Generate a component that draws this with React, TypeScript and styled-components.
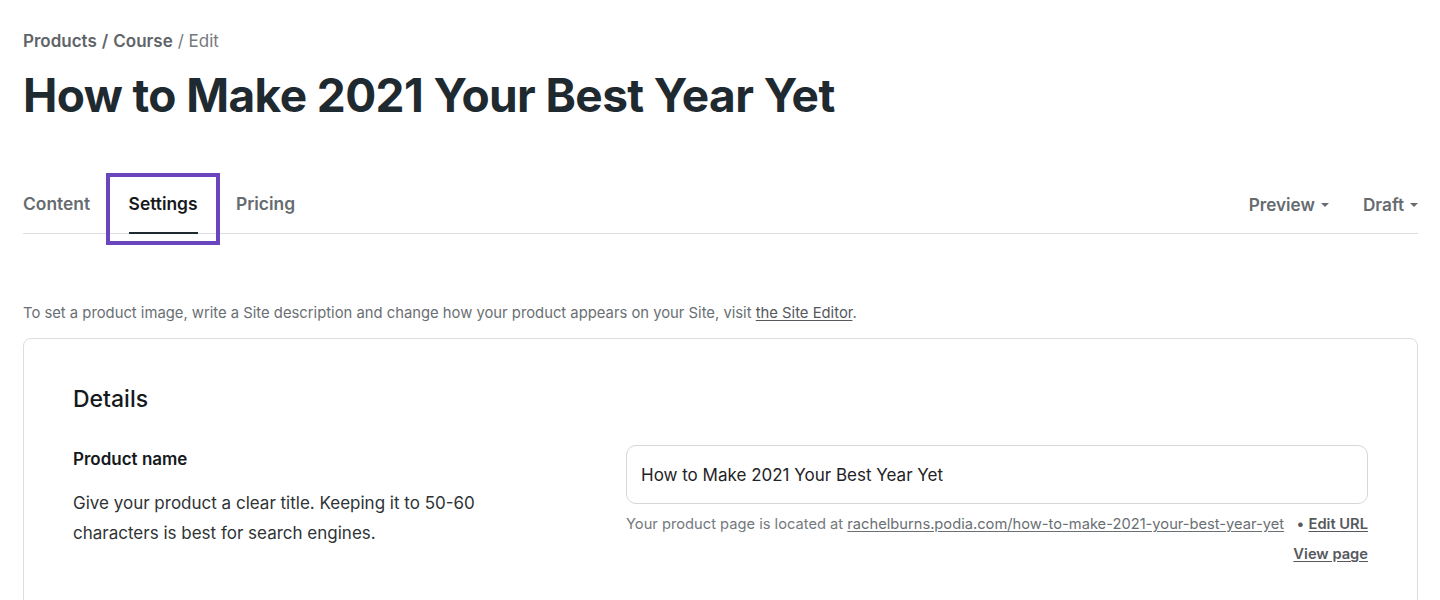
import React from "react";
import styled, { createGlobalStyle } from "styled-components";

const Global = createGlobalStyle`
  html, body { margin: 0; padding: 0; background: #ffffff; }
  body { font-family: Inter, "Noto Sans", "Liberation Sans", sans-serif; color: #1f2a30; }
  * { box-sizing: border-box; }
`;

const Page = styled.div`
  padding: 29px 22px 0 23px;
  height: 600px;
  overflow: hidden;
`;

const Breadcrumb = styled.nav`
  font-size: 17px;
  line-height: 24px;
  color: #5f6468;
  font-weight: 600;
  display: flex;
  gap: 5px;
`;

const Crumb = styled.span<{ $current?: boolean }>`
  font-weight: ${(p) => (p.$current ? 400 : 600)};
  color: ${(p) => (p.$current ? "#74797d" : "#5f6468")};
`;

const Title = styled.h1`
  margin: 12px 0 0;
  font-size: 46px;
  line-height: 60px;
  font-weight: 700;
  letter-spacing: -0.6px;
  color: #1f2a30;
`;

const TabBar = styled.div`
  margin-top: 49px;
  display: flex;
  align-items: stretch;
  border-bottom: 1px solid #dcdde0;
  height: 60px;
`;

const Tabs = styled.div`
  display: flex;
  gap: 38.5px;
  flex: 1;
`;

const Tab = styled.div<{ $active?: boolean }>`
  position: relative;
  display: flex;
  align-items: center;
  font-size: 17.4px;
  font-weight: 600;
  color: ${(p) => (p.$active ? "#15191c" : "#666b6f")};
  border-bottom: 2px solid ${(p) => (p.$active ? "#1f2a30" : "transparent")};
  margin-bottom: -1px;
  padding-top: 1px;
`;

const Highlight = styled.span`
  position: absolute;
  left: -23px;
  right: -22px;
  top: -1px;
  bottom: -13px;
  border: 4px solid #6a45bd;
  pointer-events: none;
`;

const Menus = styled.div`
  display: flex;
  gap: 34px;
`;

const Menu = styled.div`
  display: flex;
  align-items: center;
  gap: 6px;
  font-size: 17.2px;
  font-weight: 600;
  color: #666b6f;
  padding-top: 1px;
`;

const Caret = styled.span`
  width: 0;
  height: 0;
  border-left: 4px solid transparent;
  border-right: 4px solid transparent;
  border-top: 4px solid #666b6f;
  margin-top: 2px;
`;

const Info = styled.p`
  margin: 68px 0 0;
  font-size: 14.8px;
  line-height: 22px;
  color: #6a6f73;
`;

const InfoLink = styled.a`
  color: #55595d;
  text-decoration: underline;
  text-underline-offset: 2px;
`;

const Card = styled.section`
  margin-top: 14px;
  border: 1px solid #dcdde0;
  border-radius: 8px;
  padding: 44px 49px 60px;
`;

const CardTitle = styled.h2`
  margin: 0;
  font-size: 23px;
  line-height: 32px;
  font-weight: 500;
  color: #15191c;
`;

const FieldRow = styled.div`
  margin-top: 30px;
  display: grid;
  grid-template-columns: 553px 1fr;
`;

const FieldLabel = styled.div`
  font-size: 17px;
  line-height: 24px;
  font-weight: 600;
  color: #15191c;
  padding-top: 2px;
`;

const FieldDesc = styled.p`
  margin: 17px 0 0;
  font-size: 17px;
  line-height: 30px;
  color: #2e3336;
  max-width: 440px;
`;

const FieldControl = styled.div`
  display: flex;
  flex-direction: column;
`;

const Input = styled.input`
  height: 59px;
  border: 1px solid #d6d7da;
  border-radius: 10px;
  padding: 0 14px;
  font-family: inherit;
  font-size: 17px;
  color: #1f2326;
  outline: none;
  background: #fff;
`;

const Helper = styled.div`
  margin-top: 9px;
  display: flex;
  justify-content: space-between;
  font-size: 14.7px;
  line-height: 22px;
  color: #74797d;
`;

const HelperLink = styled.a`
  color: #6a6f73;
  text-decoration: underline;
  text-underline-offset: 2px;
`;

const Actions = styled.div`
  display: flex;
  flex-direction: column;
  align-items: flex-end;
  gap: 8px;
`;

const BoldLink = styled.a`
  color: #55595d;
  font-weight: 600;
  text-decoration: underline;
  text-underline-offset: 2px;
`;

const Dot = styled.span`
  color: #55595d;
  margin-right: 4px;
`;

export default function App() {
  return (
    <>
      <Global />
      <Page>
        <Breadcrumb>
          <Crumb>Products</Crumb>
          <Crumb>/</Crumb>
          <Crumb>Course</Crumb>
          <Crumb $current>/ Edit</Crumb>
        </Breadcrumb>
        <Title>How to Make 2021 Your Best Year Yet</Title>
        <TabBar>
          <Tabs>
            <Tab>Content</Tab>
            <Tab $active>
              Settings
              <Highlight />
            </Tab>
            <Tab>Pricing</Tab>
          </Tabs>
          <Menus>
            <Menu>
              Preview <Caret />
            </Menu>
            <Menu>
              Draft <Caret />
            </Menu>
          </Menus>
        </TabBar>
        <Info>
          To set a product image, write a Site description and change how your product appears on your Site, visit{" "}
          <InfoLink>the Site Editor</InfoLink>.
        </Info>
        <Card>
          <CardTitle>Details</CardTitle>
          <FieldRow>
            <div>
              <FieldLabel>Product name</FieldLabel>
              <FieldDesc>
                Give your product a clear title. Keeping it to 50-60 characters is best for search engines.
              </FieldDesc>
            </div>
            <FieldControl>
              <Input defaultValue="How to Make 2021 Your Best Year Yet" />
              <Helper>
                <span>
                  Your product page is located at{" "}
                  <HelperLink>rachelburns.podia.com/how-to-make-2021-your-best-year-yet</HelperLink>
                </span>
                <Actions>
                  <span>
                    <Dot>•</Dot>
                    <BoldLink>Edit URL</BoldLink>
                  </span>
                  <BoldLink>View page</BoldLink>
                </Actions>
              </Helper>
            </FieldControl>
          </FieldRow>
        </Card>
      </Page>
    </>
  );
}
